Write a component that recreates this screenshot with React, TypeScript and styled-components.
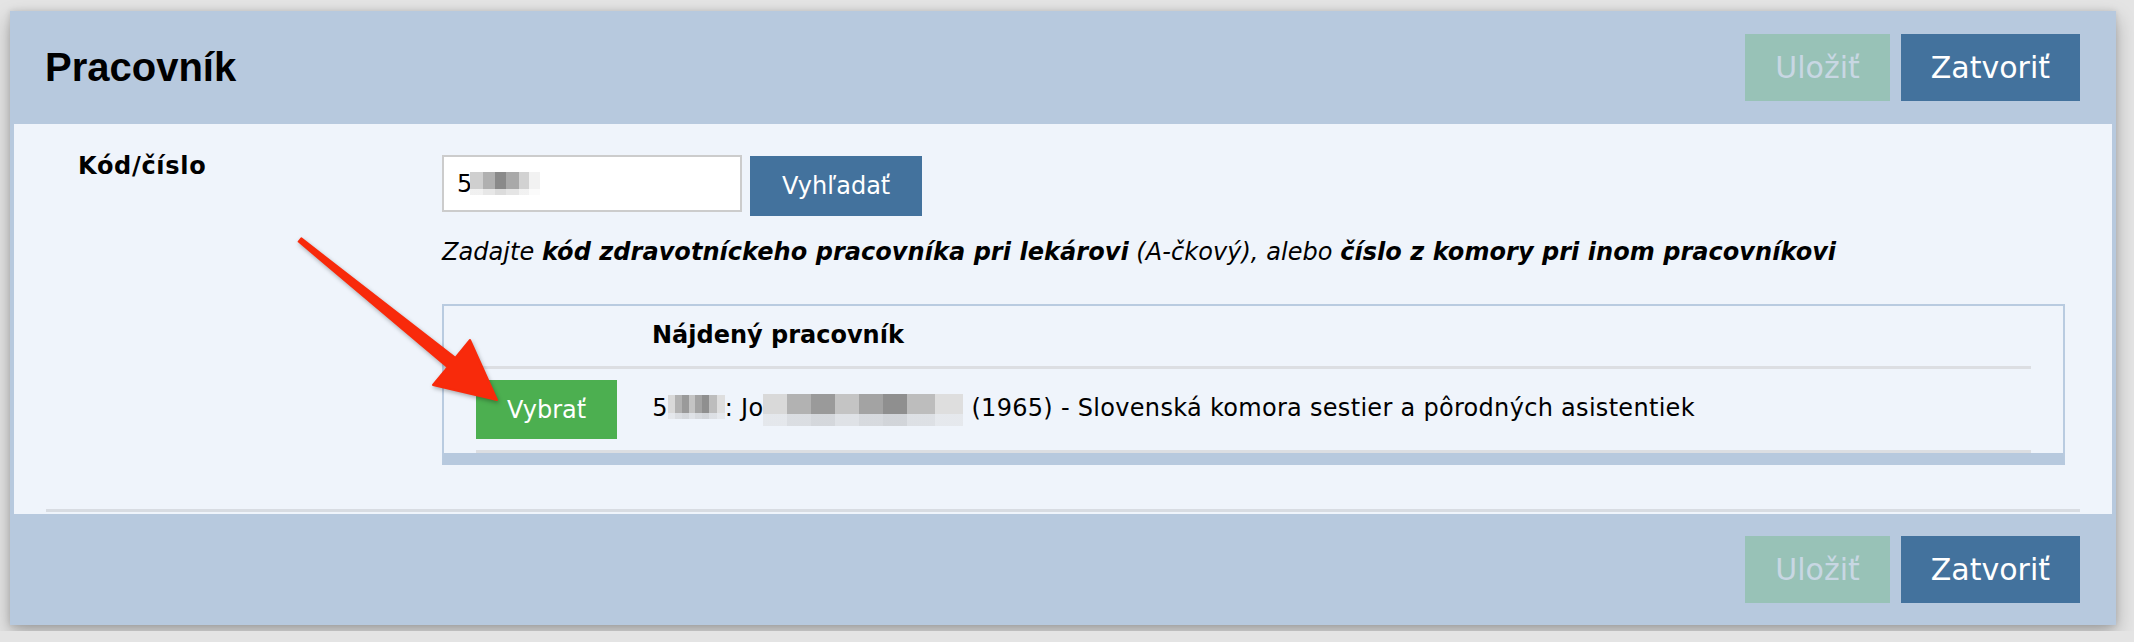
import React from 'react';
import styled, { createGlobalStyle } from 'styled-components';

const GlobalStyle = createGlobalStyle`
  html, body {
    margin: 0;
    padding: 0;
    background: #e4e4e4;
  }
  body {
    font-family: "DejaVu Sans", Verdana, sans-serif;
    font-size: 24px;
    color: #000;
  }
`;

export default function App() {
  return (
    <>
      <GlobalStyle />
      <Page>
        <Dialog>
          <DialogHeader>
            <Title>Pracovník</Title>
            <ButtonGroup>
              <ActionButton disabled>Uložiť</ActionButton>
              <ActionButton>Zatvoriť</ActionButton>
            </ButtonGroup>
          </DialogHeader>

          <DialogBody>
            <Content>
              <FormRow>
                <Label>Kód/číslo</Label>
                <Field>
                  <SearchLine>
                    <InputWrap>
                      <CodeInput defaultValue="5" />
                      <InputBlur $w={70} $h={23} />
                    </InputWrap>
                    <SearchButton>Vyhľadať</SearchButton>
                  </SearchLine>

                  <Hint>
                    Zadajte <b>kód zdravotníckeho pracovníka pri lekárovi</b> (A-čkový), alebo{' '}
                    <b>číslo z komory pri inom pracovníkovi</b>
                  </Hint>

                  <ResultBox>
                    <ResultHeader>Nájdený pracovník</ResultHeader>
                    <ResultRow>
                      <PickButton>Vybrať</PickButton>
                      <ResultText>
                        5<Blur $w={57} $h={24} />: Jo<Blur $w={200} $h={32} $tall /> (1965) - Slovenská komora sestier a pôrodných asistentiek
                      </ResultText>
                    </ResultRow>
                  </ResultBox>
                </Field>
              </FormRow>
            </Content>
          </DialogBody>

          <DialogFooter>
            <ButtonGroup>
              <ActionButton disabled>Uložiť</ActionButton>
              <ActionButton>Zatvoriť</ActionButton>
            </ButtonGroup>
          </DialogFooter>

          <Arrow width="240" height="200" viewBox="0 0 240 200">
            <path
              d="M21.3 18.4 L175.3 137.8 L190 120 L217 180 L153 165 L167.7 147.2 L18.7 21.6 Z"
              fill="#f82a0b"
              stroke="#f82a0b"
              strokeWidth="2"
              strokeLinejoin="round"
            />
          </Arrow>
        </Dialog>
      </Page>
    </>
  );
}

const Page = styled.div`
  padding: 11px 0 0 10px;
  height: 631px;
  box-sizing: border-box;
`;

const Dialog = styled.div`
  position: relative;
  width: 2106px;
  background: #b7c9de;
  box-shadow: 0 8px 18px rgba(0, 0, 0, 0.28), 0 0 6px rgba(0, 0, 0, 0.12);
`;

const DialogHeader = styled.div`
  height: 113px;
  display: flex;
  align-items: center;
  justify-content: space-between;
  padding: 0 36px 0 35px;
  box-sizing: border-box;
`;

const DialogFooter = styled.div`
  height: 111px;
  display: flex;
  align-items: center;
  justify-content: flex-end;
  padding: 0 36px;
  box-sizing: border-box;
`;

const Title = styled.h1`
  margin: 0;
  font-family: "Liberation Sans", Arial, sans-serif;
  font-weight: 700;
  font-size: 40px;
  color: #000;
`;

const ButtonGroup = styled.div`
  display: flex;
  gap: 11px;
`;

const ActionButton = styled.button`
  height: 67px;
  padding: 0 30px;
  border: none;
  font-family: "DejaVu Sans", Verdana, sans-serif;
  font-size: 30px;
  color: #fff;
  background: #43729d;
  cursor: pointer;

  &:disabled {
    background: #98c2b7;
    color: #c8d7e3;
    cursor: default;
  }
`;

const DialogBody = styled.div`
  margin: 0 4px;
  padding: 28px 32px 2px;
  background: #eff4fb;
`;

const Content = styled.div`
  padding-bottom: 44px;
  border-bottom: 3px solid #d8dce2;
`;

const FormRow = styled.div`
  display: flex;
  align-items: flex-start;
`;

const Label = styled.div`
  width: 396px;
  padding-left: 32px;
  box-sizing: border-box;
  font-weight: 700;
  line-height: 28px;
  letter-spacing: 0.7px;
  flex-shrink: 0;
`;

const Field = styled.div`
  flex: 1;
  padding: 3px 15px 0 0;
  display: flex;
  flex-direction: column;
`;

const SearchLine = styled.div`
  display: flex;
  align-items: flex-start;
  gap: 8px;
`;

const InputWrap = styled.div`
  position: relative;
`;

const CodeInput = styled.input`
  width: 300px;
  height: 57px;
  box-sizing: border-box;
  border: 2px solid #cccccc;
  background: #fff;
  padding: 0 13px;
  font-family: "DejaVu Sans", Verdana, sans-serif;
  font-size: 24px;
  color: #000;
  outline: none;
`;

const SearchButton = styled.button`
  height: 60px;
  margin-top: 1px;
  padding: 0 32px;
  border: none;
  background: #43729d;
  color: #fff;
  font-family: "DejaVu Sans", Verdana, sans-serif;
  font-size: 24px;
  cursor: pointer;
`;

const Hint = styled.p`
  margin: 22px 0 0;
  font-style: italic;
  line-height: 28px;
  letter-spacing: 0.05px;
  white-space: nowrap;
`;

const ResultBox = styled.div`
  margin-top: 38px;
  border: 2px solid #b9cbe0;
  border-bottom-width: 12px;
  border-bottom-color: #b7c9de;
`;

const ResultHeader = styled.div`
  margin-right: 32px;
  padding: 15px 0 17px 208px;
  font-weight: 700;
  line-height: 28px;
  border-bottom: 3px solid #dcdee2;
`;

const ResultRow = styled.div`
  display: flex;
  align-items: center;
  gap: 35px;
  margin: 0 32px;
  padding: 11px 0;
  border-bottom: 3px solid #dcdee2;
`;

const PickButton = styled.button`
  height: 59px;
  padding: 0 31px;
  border: none;
  background: #4caf50;
  color: #fff;
  font-family: "DejaVu Sans", Verdana, sans-serif;
  font-size: 24px;
  cursor: pointer;
`;

const ResultText = styled.div`
  line-height: 28px;
  letter-spacing: 0.3px;
  white-space: nowrap;
`;

const Blur = styled.span<{ $w: number; $h: number; $tall?: boolean }>`
  display: inline-block;
  width: ${p => p.$w}px;
  height: ${p => p.$h}px;
  vertical-align: ${p => (p.$tall ? '-10px' : '-3px')};
  background-image:
    linear-gradient(180deg, transparent 0 ${p => (p.$tall ? '62%' : '75%')}, rgba(232, 236, 242, 0.75) ${p => (p.$tall ? '62%' : '75%')}),
    linear-gradient(90deg, #d9d9d9 0 12%, #b2b2b2 12% 24%, #9a9a9a 24% 36%, #c4c4c4 36% 48%, #a3a3a3 48% 60%, #8f8f8f 60% 72%, #bdbdbd 72% 86%, #dedede 86%);
`;

const InputBlur = styled(Blur)`
  position: absolute;
  left: 28px;
  top: 17px;
  background-image:
    linear-gradient(180deg, transparent 0 75%, rgba(255, 255, 255, 0.7) 75%),
    linear-gradient(90deg, #cfcfcf 0 18%, #b0b0b0 18% 36%, #8a8a8a 36% 52%, #a9a9a9 52% 70%, #d2d2d2 70% 84%, #f2f2f2 84%);
`;

const Arrow = styled.svg`
  position: absolute;
  left: 270px;
  top: 209px;
  filter: drop-shadow(1px 2px 2px rgba(0, 0, 0, 0.3));
  pointer-events: none;
`;
